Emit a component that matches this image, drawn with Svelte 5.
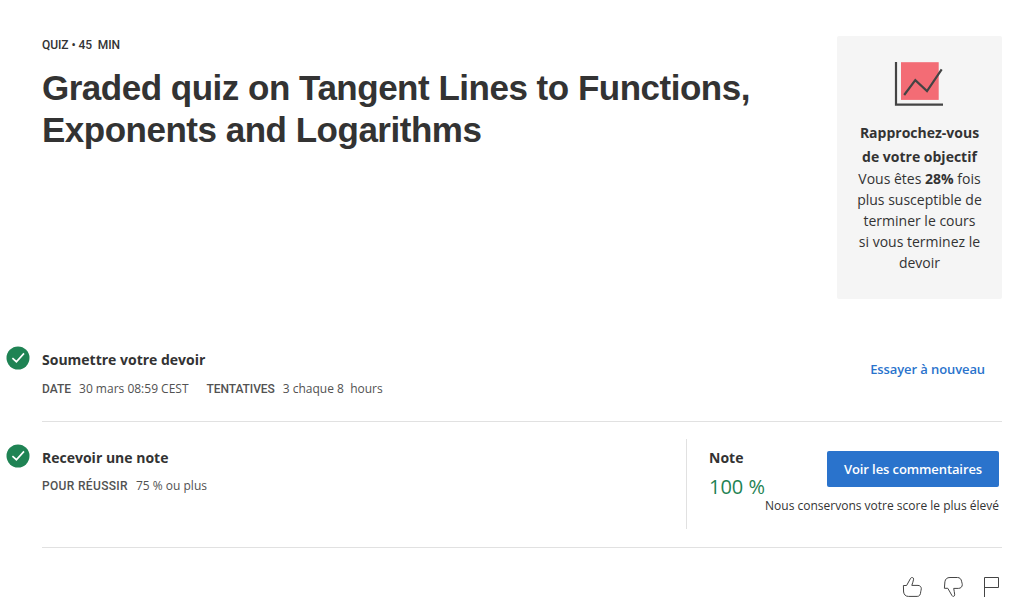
<script>
  const goalLines = ['plus susceptible de', 'terminer le cours', 'si vous terminez le', 'devoir'];
</script>

{#snippet check()}
  <svg class="check" width="24" height="24" viewBox="0 0 24 24" aria-hidden="true">
    <circle cx="12" cy="12" r="11.5" fill="#1f8354" />
    <path d="M6.4 12.2 10.4 15.7 18 7.4" fill="none" stroke="#fff" stroke-width="1.7" />
  </svg>
{/snippet}

<main>
  <header>
    <div class="intro">
      <div class="kind">QUIZ • 45 &nbsp;MIN</div>
      <h1>Graded quiz on Tangent Lines to Functions,<br />Exponents and Logarithms</h1>
    </div>
    <aside>
      <svg width="50" height="46" viewBox="0 0 50 46" aria-hidden="true">
        <rect x="7" y="1.2" width="37.7" height="37.7" fill="#f36c75" />
        <path d="M2 1V43.6H49" fill="none" stroke="#444" stroke-width="2.2" />
        <path d="M10.2 34 21.3 19.2 33 30 47.7 8.3" fill="none" stroke="#444" stroke-width="2.2" />
      </svg>
      <div class="goal">Rapprochez-vous<br />de votre objectif</div>
      <p>Vous êtes <b>28%</b> fois{#each goalLines as line}<br />{line}{/each}</p>
    </aside>
  </header>

  <section class="submit">
    {@render check()}
    <div class="info">
      <h2>Soumettre votre devoir</h2>
      <div class="meta">
        <span class="label date">DATE</span><span class="value first">30 mars 08:59 CEST</span>
        <span class="label tries">TENTATIVES</span><span class="value">3 chaque 8 &nbsp;hours</span>
      </div>
    </div>
    <button class="retry">Essayer à nouveau</button>
  </section>

  <section class="grade">
    {@render check()}
    <div class="info">
      <h2>Recevoir une note</h2>
      <div class="meta">
        <span class="label pass">POUR RÉUSSIR</span><span class="value">75 % ou plus</span>
      </div>
    </div>
    <div class="result">
      <div class="score">
        <h2>Note</h2>
        <div class="percent">100 %</div>
      </div>
      <div class="feedback">
        <button class="primary">Voir les commentaires</button>
        <div class="keep">Nous conservons votre score le plus élevé</div>
      </div>
    </div>
  </section>

  <footer>
    <svg width="20" height="22" viewBox="0 0 20 22" aria-label="J'aime">
      <path d="M1.4 9.5H4.6L8.6 2.3C9.3 1 11.8 1.3 11.6 3.2 11.4 5.2 10.4 7.2 9.8 9.4H16C18 9.4 19.3 10.9 19.3 12.7 19.3 14 18.8 14.6 18.7 15.8 18.6 18.6 17.5 20.4 15.2 20.4H6.4C3.6 20.4 2 18.6 1.6 16Z" />
    </svg>
    <svg width="20" height="22" viewBox="0 0 20 22" aria-label="Je n'aime pas">
      <path d="M1.4 12.3H4.8L9 19.6C9.6 20.9 11.7 20.6 11.7 18.8 11.7 16.6 10.9 14.8 10.7 12.4H15.4C17.8 12.4 19.3 10.7 19.3 8.6 19.3 7.6 18.9 6.9 18.7 5.8 18.3 3 16.8 1.5 14.4 1.5H7C4 1.5 2.3 3 1.9 5.8Z" />
    </svg>
    <svg class="flag" width="16" height="22" viewBox="0 0 16 22" aria-label="Signaler">
      <path d="M1.5 21V1.5H15.5V11.5H1.5" />
    </svg>
  </footer>
</main>

<style>
  :global(body) { background: #fff; overflow: hidden; }
  main {
    box-sizing: border-box;
    width: 1025px;
    height: 613px;
    padding: 36px 23px 0 42px;
    font-family: 'Open Sans', sans-serif;
    color: #333;
    white-space: nowrap;
  }
  h1, h2, p { margin: 0; }
  button { border: 0; font: inherit; padding: 0; }
  svg { display: block; flex: none; }
  header { display: flex; justify-content: space-between; height: 263px; }
  .kind { font: 500 12px/18px Roboto, sans-serif; letter-spacing: -0.07px; }
  h1 {
    margin-top: 13px;
    font: bold 35px/42px 'Liberation Sans', Arial, sans-serif;
    letter-spacing: -0.49px;
  }
  aside {
    box-sizing: border-box;
    width: 165px;
    height: 263px;
    padding-top: 25px;
    background: #f5f5f5;
    border-radius: 2px;
    text-align: center;
  }
  aside svg { margin: 0 0 0 57px; }
  .goal { margin-top: 14px; font-weight: 700; font-size: 14px; line-height: 24px; }
  p { margin-top: -1px; font-size: 14px; line-height: 21px; }
  section { display: flex; border-bottom: 1px solid #e1e1e1; }
  .submit { height: 75px; padding-top: 47px; }
  .grade { height: 108px; padding-top: 17px; }
  .check { margin-left: -36px; margin-right: 12px; }
  .info { flex: 1; }
  .grade .check { margin-top: 5px; }
  .grade .info { margin-top: 5px; }
  h2 { font-size: 14px; line-height: 28px; font-weight: 700; }
  .meta { display: flex; align-items: center; margin-top: 5px; font-size: 12px; line-height: 18px; color: #525252; }
  .submit .meta { margin-top: 6px; }
  .label { font-family: Roboto, sans-serif; font-weight: 500; margin-right: 8px; }
  .tries { letter-spacing: -0.07px; }
  .pass { letter-spacing: 0.33px; }
  .first { margin-right: 18px; }
  .retry {
    align-self: flex-start;
    margin: 14px 17px 0 0;
    background: none;
    color: #2a73cc;
    font-size: 13px;
    line-height: 18px;
    font-weight: 600;
    letter-spacing: -0.1px;
  }
  .result {
    box-sizing: border-box;
    display: flex;
    width: 316px;
    height: 90px;
    padding: 5px 3px 0 22px;
    border-left: 1px solid #e1e1e1;
  }
  .score { width: 56px; flex: none; }
  .percent { font-size: 20px; line-height: 30px; color: #1f8354; }
  .feedback { display: flex; flex: 1; flex-direction: column; align-items: flex-end; padding-top: 7px; }
  .primary {
    width: 172px;
    height: 36px;
    border-radius: 2px;
    background: #2a73cc;
    color: #fff;
    font-size: 13px;
    font-weight: 600;
    letter-spacing: -0.1px;
  }
  .keep { margin-top: 10px; font-size: 12px; line-height: 18px; }
  footer { display: flex; justify-content: flex-end; gap: 21px; padding: 28px 3px 0 0; }
  footer path { fill: none; stroke: #444; stroke-width: 1; }
  .flag { margin-left: -1px; }
</style>
